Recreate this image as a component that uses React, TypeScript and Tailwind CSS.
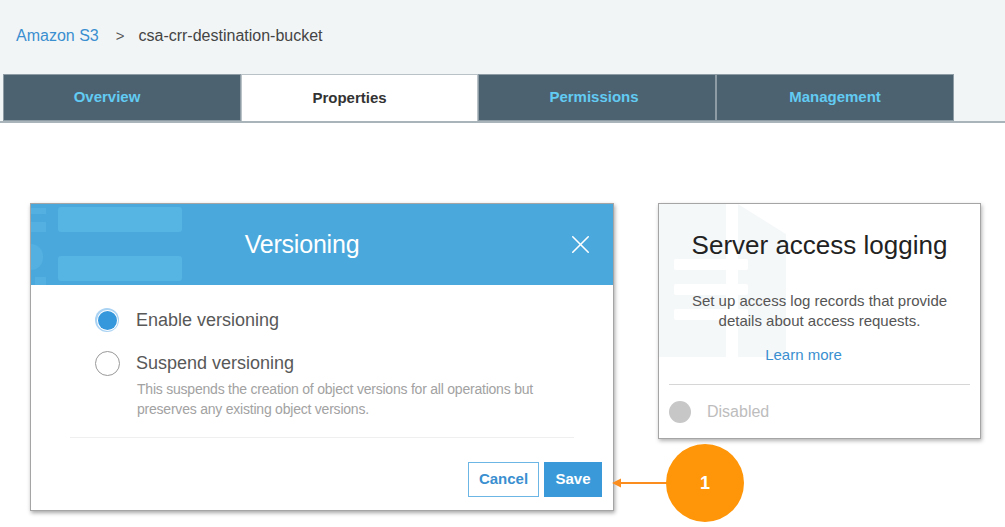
import { X } from 'lucide-react';

const tabs = [
  { label: 'Overview', active: false, shift: 'pr-[30px]' },
  { label: 'Properties', active: true, shift: 'pr-[20px]' },
  { label: 'Permissions', active: false, shift: 'pr-[6px]' },
  { label: 'Management', active: false, shift: 'pr-0' },
];

function Tabs() {
  return (
    <div className="flex pl-[3px] border-b-2 border-[#a9b4ba]">
      {tabs.map(t => (
        <div
          key={t.label}
          className={
            (t.active
              ? 'w-[237px] h-[47px] bg-white border border-b-0 border-[#b9c2c7] flex items-center justify-center text-[15px] font-bold text-[#333] '
              : 'w-[238px] h-[47px] bg-[#4d6270] border border-[#8d9ca5] flex items-center justify-center text-[15px] font-bold text-[#62cbf3] ') + t.shift
          }
        >
          {t.label}
        </div>
      ))}
    </div>
  );
}

function VersioningModal() {
  return (
    <div className="w-[584px] h-[308px] bg-white border border-[#a5a5a5] shadow-[1px_2px_4px_rgba(0,0,0,0.35)] flex flex-col">
      <div className="relative h-[81px] bg-[#4aa8dc] flex items-center justify-center pr-[40px] overflow-hidden">
        {/* faded watermark */}
        <div className="absolute left-[27px] top-[3px] w-[124px] h-[25px] rounded-[3px] bg-[#56b5e3]" />
        <div className="absolute left-[27px] top-[52px] w-[124px] h-[25px] rounded-[3px] bg-[#56b5e3]" />
        <div className="absolute left-0 top-[4px] w-[15px] h-[6px] bg-[#53b0e0]" />
        <div className="absolute left-0 top-[18px] w-[15px] h-[10px] bg-[#53b0e0]" />
        <div className="absolute left-[-12px] top-[40px] w-[24px] h-[26px] rounded-full bg-[#53b0e0]" />
        <div className="absolute left-[4px] top-[73px] w-[11px] h-[8px] bg-[#53b0e0]" />
        <span className="relative text-white text-[25px] font-light tracking-[-0.2px]">Versioning</span>
        <X className="absolute right-[17px] top-[25px] text-white" size={31} strokeWidth={1.2} />
      </div>

      <div className="flex-1 flex flex-col">
        <div className="pl-[64px] pt-[23px] flex flex-col">
          <div className="flex items-center h-[24px]">
            <div className="w-[24px] h-[24px] rounded-full bg-[#a9d2f3] flex items-center justify-center">
              <div className="w-[21px] h-[21px] rounded-full bg-white flex items-center justify-center">
                <div className="w-[19px] h-[19px] rounded-full bg-[#3597dc]" />
              </div>
            </div>
            <span className="ml-[17px] text-[18px] text-[#585858]">Enable versioning</span>
          </div>
          <div className="flex items-center h-[24px] mt-[19px]">
            <div className="w-[25px] h-[25px] rounded-full border border-[#999] bg-white" />
            <span className="ml-[16px] text-[18px] text-[#585858]">Suspend versioning</span>
          </div>
          <p className="ml-[42px] mt-[4px] text-[14px] leading-[20px] text-[#a2a2a2] tracking-[-0.22px]">
            This suspends the creation of object versions for all operations but
            <br />
            preserves any existing object versions.
          </p>
        </div>
        <div className="mx-[39px] mt-[18px] h-px bg-[#efefef]" />
        <div className="flex justify-end gap-[5px] pr-[11px] mt-[24px]">
          <button className="w-[71px] h-[35px] border border-[#6cb6e6] text-[#3a8fd0] text-[15px] font-bold bg-white">
            Cancel
          </button>
          <button className="w-[58px] h-[35px] bg-[#3a9ad9] text-white text-[15px] font-bold">Save</button>
        </div>
      </div>
    </div>
  );
}

function LoggingCard() {
  return (
    <div className="relative w-[323px] h-[236px] bg-white border border-[#a5a5a5] shadow-[1px_2px_4px_rgba(0,0,0,0.3)] overflow-hidden">
      {/* document watermark */}
      <svg className="absolute left-0 top-0" width="130" height="160" viewBox="0 0 130 160">
        <path d="M0 0 H67 V153 H0 Z" fill="#f5f8f9" />
        <path d="M79 0 L127 30 V153 H79 Z" fill="#f5f8f9" />
        <rect x="15" y="55" width="74" height="11" rx="2" fill="#ffffff" />
        <rect x="15" y="80" width="74" height="11" rx="2" fill="#ffffff" />
        <rect x="15" y="105" width="74" height="11" rx="2" fill="#ffffff" />
      </svg>
      <div className="relative flex flex-col items-center">
        <h2 className="mt-[25px] text-[26px] text-[#222] leading-[32px]">Server access logging</h2>
        <p className="mt-[30px] text-[15px] leading-[20px] text-[#555] text-center">
          Set up access log records that provide
          <br />
          details about access requests.
        </p>
        <span className="mt-[14px] mr-[32px] text-[15px] leading-[20px] text-[#3a8fd0]">Learn more</span>
      </div>
      <div className="relative mx-[10px] mt-[19px] h-px bg-[#d6d6d6]" />
      <div className="relative flex items-center pl-[10px] mt-[15px]">
        <div className="w-[22px] h-[22px] rounded-full bg-[#c7c7c7]" />
        <span className="ml-[16px] text-[16px] text-[#bdbdbd]">Disabled</span>
      </div>
    </div>
  );
}

export default function App() {
  return (
    <div
      className="relative w-[1005px] h-[527px] overflow-hidden bg-white"
      style={{ fontFamily: '"Liberation Sans", Arial, sans-serif' }}
    >
      <div className="bg-[#f2f5f6] pt-[26px]">
        <div className="flex items-center h-[20px] pl-[16px] text-[16px]">
          <span className="text-[#3a8fd0]">Amazon S3</span>
          <span className="ml-[17px] text-[#555] text-[15px]">&gt;</span>
          <span className="ml-[14px] text-[#444]">csa-crr-destination-bucket</span>
        </div>
        <div className="mt-[28px]">
          <Tabs />
        </div>
      </div>

      <div className="flex items-start pt-[80px] pl-[30px] gap-[44px]">
        <VersioningModal />
        <LoggingCard />
      </div>

      {/* step annotation */}
      <div className="absolute left-[612px] top-[477px] flex items-center">
        <svg width="56" height="12" viewBox="0 0 56 12">
          <path d="M0 6 L9 1.5 V10.5 Z" fill="#fb8c1e" />
          <path d="M8 6 H56" stroke="#fb8c1e" strokeWidth="2" />
        </svg>
      </div>
      <div className="absolute left-[666px] top-[444px] w-[78px] h-[78px] rounded-full bg-[#ff9508] flex items-center justify-center text-white text-[18px] font-bold">
        1
      </div>
    </div>
  );
}
